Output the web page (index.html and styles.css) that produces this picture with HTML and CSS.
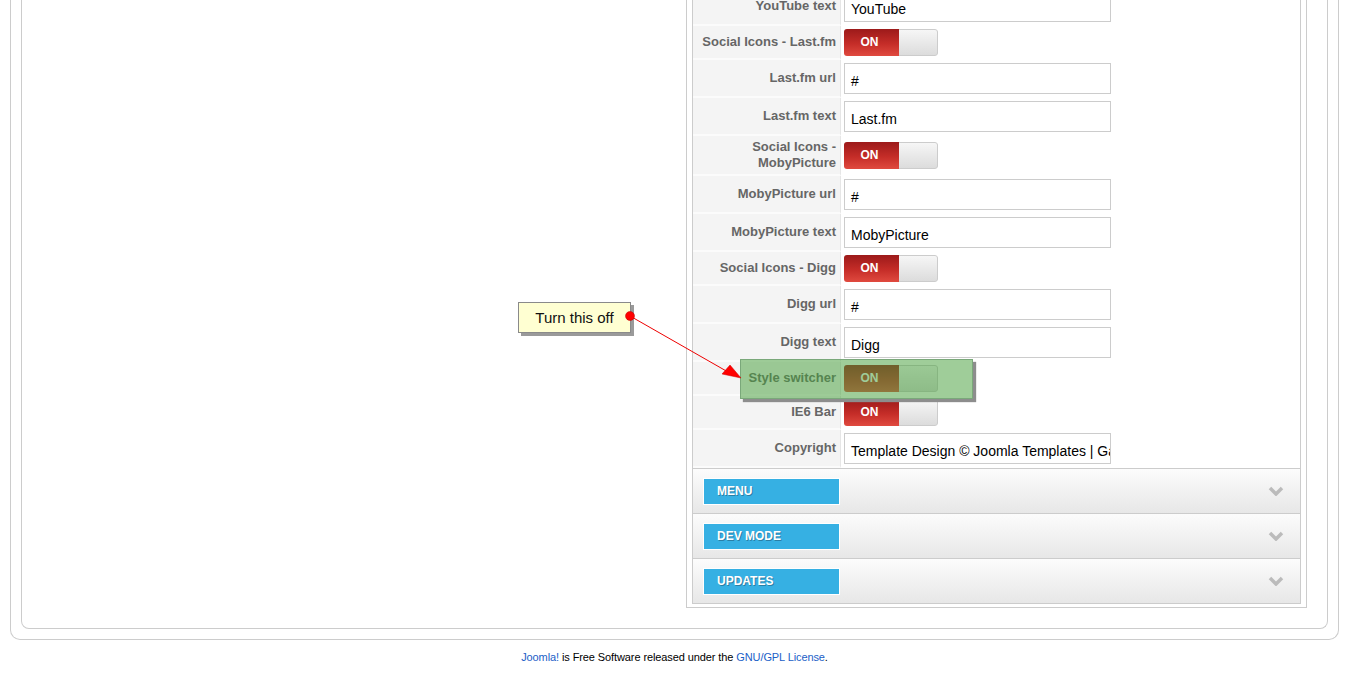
FILE: index.html
```html
<!DOCTYPE html>
<html lang="en">
<head>
    <meta charset="UTF-8">
    <meta name="viewport" content="width=device-width, initial-scale=1.0">
    <title>Template Manager: Edit Style</title>
    <link rel="stylesheet" href="styles.css">
</head>
<body>
    <div class="outer">
        <div class="inner">
            <div class="panel">
                <div class="params">
                    <div class="row">
                        <label class="key">YouTube text</label>
                        <div class="value"><div class="field">YouTube</div></div>
                    </div>
                    <div class="row">
                        <label class="key">Social Icons - Last.fm</label>
                        <div class="value"><div class="switch"><span class="on">ON</span><span class="knob"></span></div></div>
                    </div>
                    <div class="row">
                        <label class="key">Last.fm url</label>
                        <div class="value"><div class="field">#</div></div>
                    </div>
                    <div class="row">
                        <label class="key">Last.fm text</label>
                        <div class="value"><div class="field">Last.fm</div></div>
                    </div>
                    <div class="row">
                        <label class="key">Social Icons - MobyPicture</label>
                        <div class="value"><div class="switch"><span class="on">ON</span><span class="knob"></span></div></div>
                    </div>
                    <div class="row">
                        <label class="key">MobyPicture url</label>
                        <div class="value"><div class="field">#</div></div>
                    </div>
                    <div class="row">
                        <label class="key">MobyPicture text</label>
                        <div class="value"><div class="field">MobyPicture</div></div>
                    </div>
                    <div class="row">
                        <label class="key">Social Icons - Digg</label>
                        <div class="value"><div class="switch"><span class="on">ON</span><span class="knob"></span></div></div>
                    </div>
                    <div class="row">
                        <label class="key">Digg url</label>
                        <div class="value"><div class="field">#</div></div>
                    </div>
                    <div class="row">
                        <label class="key">Digg text</label>
                        <div class="value"><div class="field">Digg</div></div>
                    </div>
                    <div class="row">
                        <label class="key">Style switcher</label>
                        <div class="value"><div class="switch"><span class="on">ON</span><span class="knob"></span></div></div>
                    </div>
                    <div class="row">
                        <label class="key">IE6 Bar</label>
                        <div class="value"><div class="switch"><span class="on">ON</span><span class="knob"></span></div></div>
                    </div>
                    <div class="row">
                        <label class="key">Copyright</label>
                        <div class="value"><div class="field">Template Design &copy; Joomla Templates | GavickPro. All rights reserved.</div></div>
                    </div>
                </div>

                <div class="pane">
                    <span class="tab">MENU</span>
                    <svg class="chevron" width="16" height="10" viewBox="0 0 16 10"><polyline points="2,2 8,8 14,2"/></svg>
                </div>
                <div class="pane">
                    <span class="tab">DEV MODE</span>
                    <svg class="chevron" width="16" height="10" viewBox="0 0 16 10"><polyline points="2,2 8,8 14,2"/></svg>
                </div>
                <div class="pane">
                    <span class="tab">UPDATES</span>
                    <svg class="chevron" width="16" height="10" viewBox="0 0 16 10"><polyline points="2,2 8,8 14,2"/></svg>
                </div>
            </div>
        </div>
    </div>

    <p class="footer">
        <a href="#">Joomla!</a> is Free Software released under the <a href="#">GNU/GPL License</a>.
    </p>

    <!-- annotation drawn on top of the form -->
    <div class="note">Turn this off</div>
    <div class="mark"></div>
    <svg class="pointer" width="1349" height="674" viewBox="0 0 1349 674">
        <line x1="630" y1="316" x2="728" y2="372" stroke="#e00" stroke-width="1"/>
        <polygon points="741,378 722,374 730,365" fill="#f00" stroke="#c00" stroke-width="0.5"/>
        <circle cx="630" cy="316" r="4.5" fill="#f00" stroke="#b00" stroke-width="0.5"/>
    </svg>
</body>
</html>
```

FILE: styles.css
```css
body {
    margin: 0;
    padding: 0;
    font-family: "Liberation Sans", Arial, sans-serif;
    background: #fff;
}

.outer {
    margin: -12px 10px 0;
    padding: 0 10px 10px;
    border: 1px solid #ccc;
    border-top: none;
    border-radius: 0 0 10px 10px;
}

.inner {
    padding: 0 20px 20px 664px;
    border: 1px solid #ccc;
    border-top: none;
    border-radius: 0 0 8px 8px;
}

.panel {
    padding: 0 5px 3px;
    border: 1px solid #ccc;
    border-top: none;
}

.params {
    border-left: 1px solid #ccc;
    border-right: 1px solid #ccc;
}

.row {
    display: flex;
}

.key {
    display: flex;
    align-items: center;
    justify-content: flex-end;
    box-sizing: border-box;
    width: 148px;
    padding: 3px 4px;
    background: #f4f4f4;
    border-right: 1px solid #e6e6e6;
    border-bottom: 2px solid #fbfbfb;
    color: #666;
    font-size: 13px;
    font-weight: bold;
    line-height: 16px;
    text-align: right;
}

.value {
    flex: 1;
    display: flex;
    align-items: center;
    padding: 3px 3px 4px;
}

.field {
    box-sizing: border-box;
    width: 267px;
    height: 31px;
    padding: 8px 6px 0;
    border: 1px solid #ccc;
    background: #fff;
    color: #000;
    font-size: 14px;
    line-height: 18px;
    white-space: nowrap;
    overflow: hidden;
}

.switch {
    display: flex;
    width: 94px;
    height: 27px;
    border-radius: 3px;
    overflow: hidden;
}

.switch .on {
    width: 55px;
    padding-right: 4px;
    box-sizing: border-box;
    line-height: 27px;
    background: linear-gradient(#9c1a1a, #c52d28 55%, #e04a3f);
    color: #fff;
    font-size: 12px;
    font-weight: bold;
    text-align: center;
}

.switch .knob {
    flex: 1;
    box-sizing: border-box;
    border: 1px solid #ccc;
    border-left: none;
    border-radius: 0 3px 3px 0;
    background: linear-gradient(#f6f6f6, #dcdcdc);
}

.pane {
    display: flex;
    align-items: center;
    justify-content: space-between;
    height: 44px;
    padding: 0 16px 0 10px;
    border: 1px solid #ccc;
    border-top: none;
    background: linear-gradient(#fcfcfc, #e7e7e7);
}

.params + .pane {
    border-top: 1px solid #ccc;
}

.tab {
    box-sizing: border-box;
    width: 137px;
    height: 27px;
    padding-left: 13px;
    border: 1px solid #fff;
    background: #36b0e3;
    color: #fff;
    font-size: 12px;
    font-weight: bold;
    line-height: 25px;
    text-shadow: 1px 1px 0 #2a7fa6;
}

.chevron polyline {
    fill: none;
    stroke: #bbb;
    stroke-width: 3.5;
}

.footer {
    margin: 11px 0 0;
    color: #000;
    font-size: 11px;
    letter-spacing: -0.1px;
    text-align: center;
}

.footer a {
    color: #1b5ec7;
    text-decoration: none;
}

.note {
    position: absolute;
    left: 518px;
    top: 302px;
    width: 111px;
    height: 29px;
    border: 1px solid #8a8a8a;
    background: #ffffd2;
    box-shadow: 3px 3px 0 #9a9a9a;
    color: #111;
    font-size: 15px;
    line-height: 29px;
    text-align: center;
}

.mark {
    position: absolute;
    left: 740px;
    top: 359px;
    width: 231px;
    height: 38px;
    border: 1px solid #7aa87a;
    background: rgba(70, 160, 60, 0.52);
    box-shadow: 3px 3px 1px #8d8d8d;
}

.pointer {
    position: absolute;
    left: 0;
    top: 0;
    pointer-events: none;
}
```
